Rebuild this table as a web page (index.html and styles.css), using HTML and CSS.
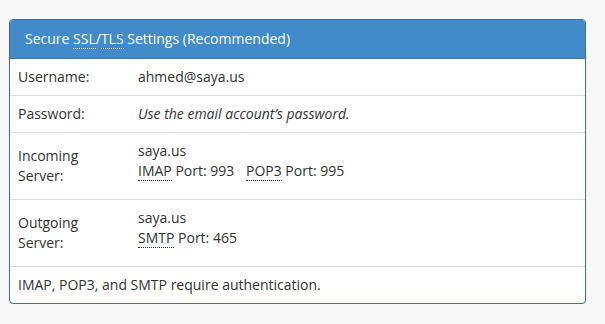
FILE: index.html
```html
<!DOCTYPE html>
<html lang="en">
<head>
  <meta charset="UTF-8" />
  <title>Mail Client Settings</title>
  <link rel="stylesheet" href="styles.css">
</head>
<body>

  <div class="page">
    <div class="panel">
      <div class="panel-heading">
        Secure <abbr title="Secure Sockets Layer">SSL</abbr>/<abbr title="Transport Layer Security">TLS</abbr> Settings (Recommended)
      </div>

      <table class="settings">
        <tr>
          <td class="label">Username:</td>
          <td>ahmed@saya.us</td>
        </tr>
        <tr>
          <td class="label">Password:</td>
          <td><em>Use the email account’s password.</em></td>
        </tr>
        <tr>
          <td class="label">Incoming<br>Server:</td>
          <td class="server">
            saya.us<br>
            <span class="port"><abbr title="Internet Message Access Protocol">IMAP</abbr> Port: 993</span>
            <span class="port"><abbr title="Post Office Protocol 3">POP3</abbr> Port: 995</span>
          </td>
        </tr>
        <tr>
          <td class="label">Outgoing<br>Server:</td>
          <td class="server">
            saya.us<br>
            <span class="port"><abbr title="Simple Mail Transfer Protocol">SMTP</abbr> Port: 465</span>
          </td>
        </tr>
      </table>

      <div class="panel-footer">IMAP, POP3, and SMTP require authentication.</div>
    </div>
  </div>

</body>
</html>
```

FILE: styles.css
```css
body {
  margin: 0;
  background: #f8f8f8;
  font-family: 'Open Sans', 'Liberation Sans', sans-serif;
  font-size: 14px;
  line-height: 20px;
  color: #333;
}

.page {
  padding: 19px 19px 0 9px;
}

.panel {
  background: #fff;
  border: 1px solid #40719c;
  border-radius: 4px;
  box-shadow: 0 1px 2px rgba(0, 0, 0, 0.08);
  overflow: hidden;
}

.panel-heading {
  background: #428bca;
  color: #fff;
  padding: 9px 15px;
  border-bottom: 1px solid #3f79ab;
}

abbr {
  text-decoration: none;
  border-bottom: 1px dotted currentColor;
  cursor: help;
}

.settings {
  width: 100%;
  border-collapse: collapse;
}

.settings td {
  padding: 8px;
  border-bottom: 1px solid #ddd;
  vertical-align: top;
}

.settings td.label {
  width: 104px;
  vertical-align: middle;
}

.settings td.server {
  padding-bottom: 18px;
}

.port + .port {
  margin-left: 8px;
}

.panel-footer {
  padding: 8px;
}
```
